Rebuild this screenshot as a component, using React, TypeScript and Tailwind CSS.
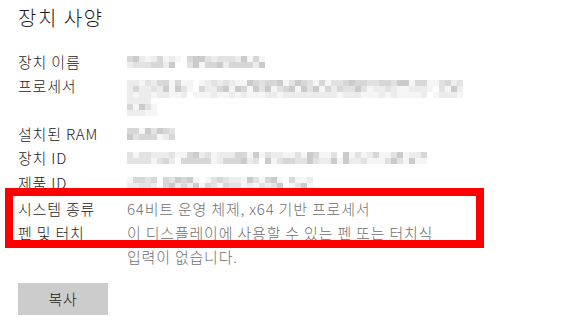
import type React from 'react';

const shades = [
  'bg-transparent',
  'bg-[#f5f5f5]',
  'bg-[#ececec]',
  'bg-[#e2e2e2]',
  'bg-[#d7d7d7]',
  'bg-[#cbcbcb]',
];

// small seeded generator so the blur pattern stays the same on every render
function makeBlur(cols: number, rows: number, seed: number, gaps: number[] = [], fade: number[] = []) {
  let s = seed;
  const next = () => {
    s = (s * 9301 + 49297) % 233280;
    return s / 233280;
  };
  const grid: number[][] = [];
  for (let r = 0; r < rows; r++) {
    const row: number[] = [];
    for (let c = 0; c < cols; c++) {
      if (gaps.includes(c)) {
        row.push(next() > 0.6 ? 1 : 0);
        continue;
      }
      const base = fade.includes(r) ? 1 + Math.floor(next() * 2) : 1 + Math.floor(next() * 5);
      row.push(Math.min(base, 5));
    }
    grid.push(row);
  }
  return grid;
}

function Blur({ grid }: { grid: number[][] }) {
  return (
    <div className="flex flex-col">
      {grid.map((row, r) => (
        <div key={r} className="flex">
          {row.map((level, c) => (
            <span key={c} className={`block h-[6px] w-[6px] ${shades[level]}`} />
          ))}
        </div>
      ))}
    </div>
  );
}

const nameBlur = makeBlur(23, 2, 11, [8, 9]);
const cpuLine1 = makeBlur(56, 3, 27, [10, 11, 50, 51], [2]);
const cpuLine2 = makeBlur(5, 3, 43, [4], [0]);
const ramBlur = makeBlur(8, 2, 61);
const idBlur = makeBlur(50, 2, 83, [8, 14, 22, 35]);
const productBlur = makeBlur(31, 2, 97, [5, 12, 19, 26]);

function Row({
  label,
  children,
  className = '',
}: {
  label: string;
  children: React.ReactNode;
  className?: string;
}) {
  return (
    <div className={`grid grid-cols-[109px_1fr] ${className}`}>
      <span className="text-[#1c1c1c]">{label}</span>
      <div>{children}</div>
    </div>
  );
}

export default function App() {
  return (
    <main
      className="relative h-[328px] w-[570px] overflow-hidden bg-white px-[18px] pt-[4px] font-light"
      style={{ fontFamily: '"Noto Sans CJK KR", "Noto Sans", sans-serif' }}
    >
      <h1 className="text-[20px] leading-[28px] tracking-[1.5px] text-[#1c1c1c]">장치 사양</h1>

      <section className="mt-[18px] flex flex-col text-[15px] leading-[24px] tracking-[0.8px]">
        <Row label="장치 이름">
          <div className="flex h-[24px] items-center">
            <Blur grid={nameBlur} />
          </div>
        </Row>
        <Row label="프로세서">
          <div className="flex flex-col py-[6px]">
            <Blur grid={cpuLine1} />
            <Blur grid={cpuLine2} />
          </div>
        </Row>
        <Row label="설치된 RAM">
          <div className="flex h-[24px] items-center">
            <Blur grid={ramBlur} />
          </div>
        </Row>
        <Row label="장치 ID">
          <div className="flex h-[24px] items-center">
            <Blur grid={idBlur} />
          </div>
        </Row>
        <Row label="제품 ID" className="mt-px">
          <div className="flex h-[24px] items-center">
            <Blur grid={productBlur} />
          </div>
        </Row>
        <Row label="시스템 종류" className="mt-[2px]">
          <span className="text-[#707070]">64비트 운영 체제, x64 기반 프로세서</span>
        </Row>
        <Row label="펜 및 터치">
          <div className="flex flex-col text-[#707070]">
            <span>이 디스플레이에 사용할 수 있는 펜 또는 터치식</span>
            <span>입력이 없습니다.</span>
          </div>
        </Row>
      </section>

      <button
        type="button"
        className="mt-[14px] flex h-[32px] w-[90px] items-center justify-center bg-[#cccccc] text-[15px] tracking-[0.8px] text-[#1c1c1c]"
      >
        복사
      </button>

      <div className="pointer-events-none absolute left-[5px] top-[188px] h-[60px] w-[479px] border-[8px] border-[#ff0000]" />
    </main>
  );
}
